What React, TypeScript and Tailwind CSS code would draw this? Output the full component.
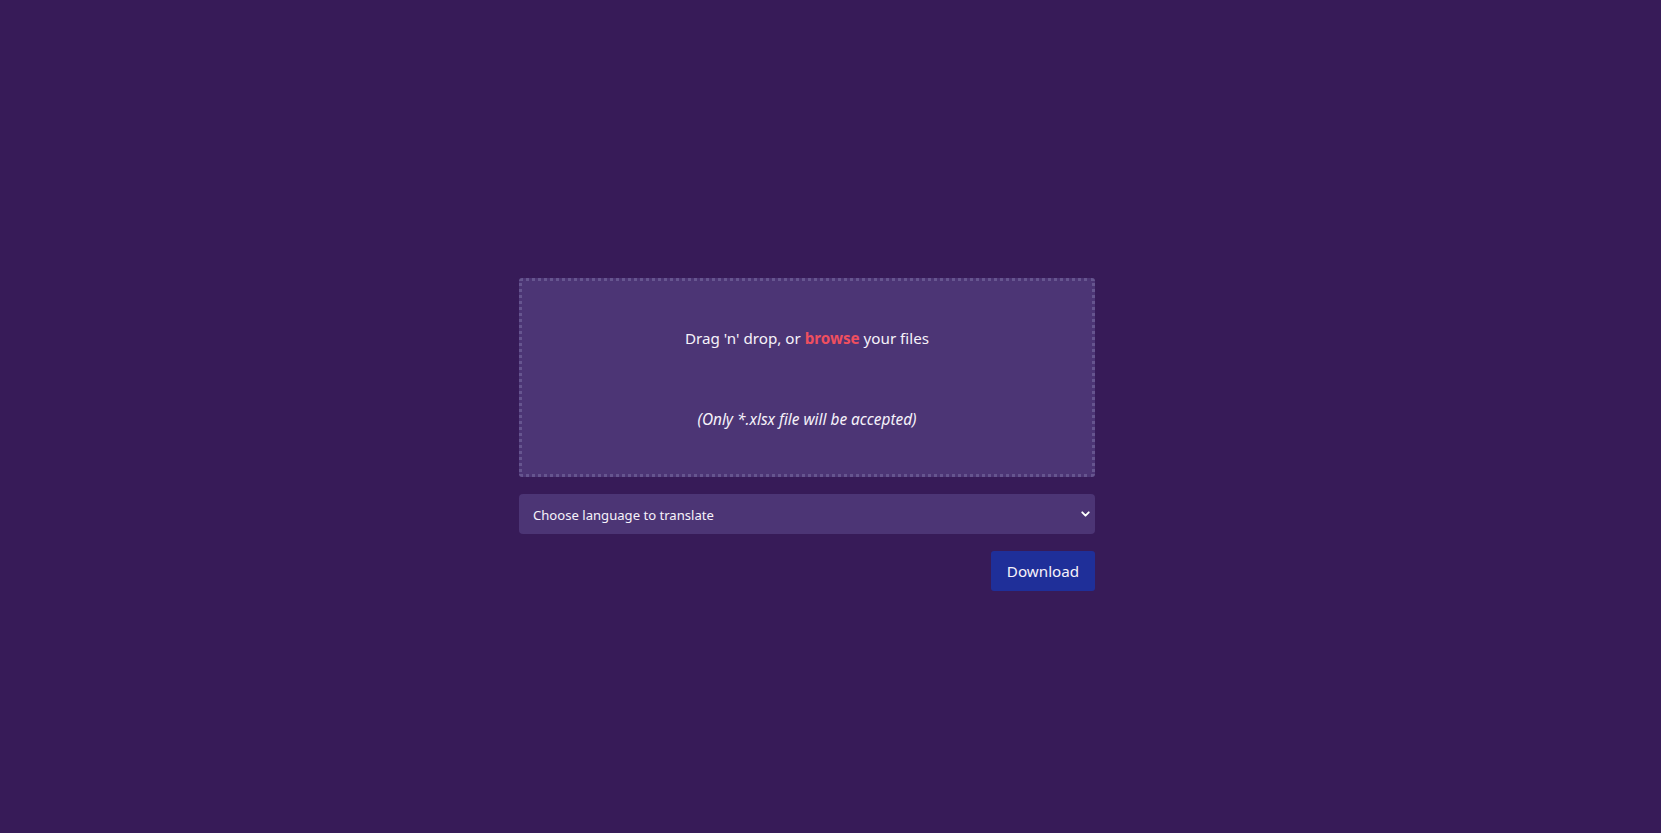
import { ChevronDown } from 'lucide-react';

export default function App() {
  return (
    <div
      className="min-h-screen w-full bg-[#371b58] pt-[278px]"
      style={{ fontFamily: '"Segoe UI", "Noto Sans", sans-serif' }}
    >
      <div className="ml-[519px] flex w-[576px] flex-col">
        {/* Drop zone */}
        <div className="flex h-[199px] cursor-pointer flex-col items-center justify-between rounded-[3px] border-[3px] border-dotted border-[#66558f] bg-[#4c3575] pt-[45px] pb-[42px] text-[15.2px] text-[#f6f2fa]">
          <p className="leading-6">
            Drag 'n' drop, or <span className="font-bold text-[#ef4f5f]">browse</span> your files
          </p>
          <p className="text-[15.4px] leading-6 italic">(Only *.xlsx file will be accepted)</p>
        </div>

        {/* Language select */}
        <div className="relative mt-[17px]">
          <select className="h-10 w-full appearance-none rounded-[4px] bg-[#4c3575] pt-[3px] pl-[14px] text-[13.1px] text-[#f6f2fa] outline-none">
            <option>Choose language to translate</option>
          </select>
          <ChevronDown
            className="pointer-events-none absolute top-1/2 right-[3px] h-[13px] w-[13px] -translate-y-1/2 text-white"
            strokeWidth={3.5}
          />
        </div>

        {/* Actions */}
        <div className="mt-[17px] flex justify-end">
          <button className="h-10 w-[104px] rounded-[3px] bg-[#1f2f99] text-[15.2px] text-[#f6f2fa]">
            Download
          </button>
        </div>
      </div>
    </div>
  );
}
